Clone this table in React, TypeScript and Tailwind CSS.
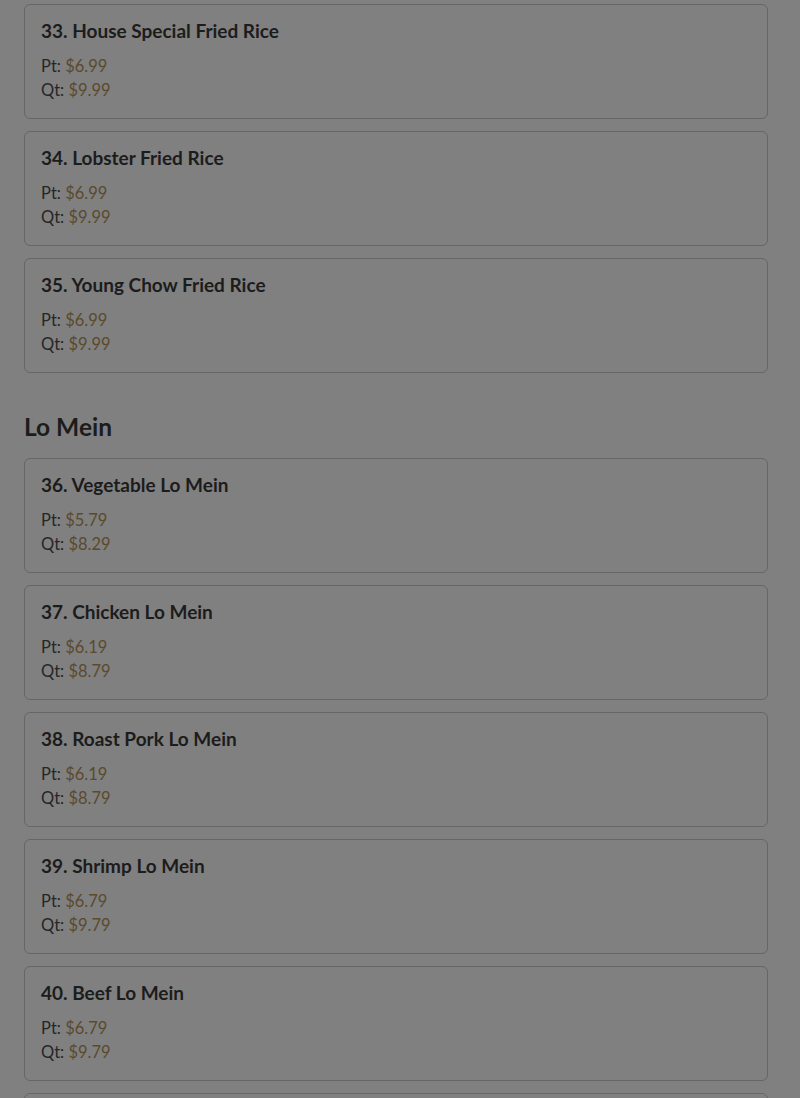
import React from "react";

type Item = { name: string; pt: string; qt: string };

const friedRice: Item[] = [
  { name: "33. House Special Fried Rice", pt: "$6.99", qt: "$9.99" },
  { name: "34. Lobster Fried Rice", pt: "$6.99", qt: "$9.99" },
  { name: "35. Young Chow Fried Rice", pt: "$6.99", qt: "$9.99" },
];

const loMein: Item[] = [
  { name: "36. Vegetable Lo Mein", pt: "$5.79", qt: "$8.29" },
  { name: "37. Chicken Lo Mein", pt: "$6.19", qt: "$8.79" },
  { name: "38. Roast Pork Lo Mein", pt: "$6.19", qt: "$8.79" },
  { name: "39. Shrimp Lo Mein", pt: "$6.79", qt: "$9.79" },
  { name: "40. Beef Lo Mein", pt: "$6.79", qt: "$9.79" },
  { name: "41. House Special Lo Mein", pt: "$6.99", qt: "$9.99" },
];

function Card({ item }: { item: Item }) {
  return (
    <div className="rounded-[6px] border border-[#666666] bg-[#808080] px-4 py-4">
      <h3 className="mb-[13px] text-[19px] font-bold leading-5 text-[#1c1c1c]">{item.name}</h3>
      <div className="text-[16.5px] leading-6 text-[#262626]">
        Pt: <span className="text-[#5b4a2c]">{item.pt}</span>
      </div>
      <div className="text-[16.5px] leading-6 text-[#262626]">
        Qt: <span className="text-[#5b4a2c]">{item.qt}</span>
      </div>
    </div>
  );
}

export default function App() {
  return (
    <div
      className="h-[1098px] overflow-hidden bg-[#808080] pl-6 pr-8 pt-1"
      style={{ fontFamily: "Lato, 'Noto Sans', sans-serif" }}
    >
      <div className="flex flex-col gap-3">
        {friedRice.map((it) => (
          <Card key={it.name} item={it} />
        ))}
      </div>
      <h2 className="mt-[38px] mb-[15px] text-[24.5px] font-bold leading-8 text-[#1c1c1c]">Lo Mein</h2>
      <div className="flex flex-col gap-3">
        {loMein.map((it) => (
          <Card key={it.name} item={it} />
        ))}
      </div>
    </div>
  );
}
